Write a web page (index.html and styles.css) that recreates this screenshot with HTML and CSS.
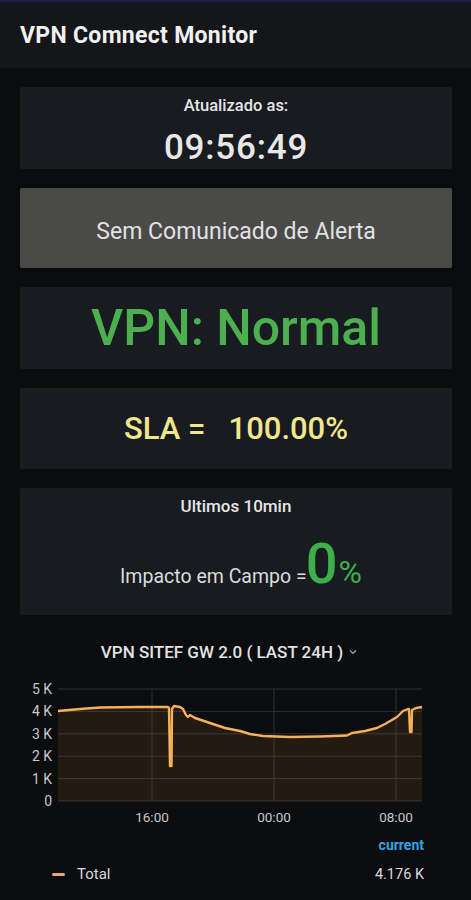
FILE: index.html
```html
<!DOCTYPE html>
<html lang="pt">
<head>
    <meta charset="UTF-8">
    <meta name="viewport" content="width=device-width, initial-scale=1.0">
    <title>VPN Comnect Monitor</title>
    <link rel="stylesheet" href="styles.css">
</head>
<body>
    <header class="topbar">
        <h1 class="title">VPN Comnect Monitor</h1>
    </header>

    <main class="panels">
        <section class="panel panel-time">
            <div class="time-label">Atualizado as:</div>
            <div class="time-value">09:56:49</div>
        </section>

        <section class="panel panel-alert">
            Sem Comunicado de Alerta
        </section>

        <section class="panel panel-status">
            VPN: Normal
        </section>

        <section class="panel panel-sla">
            <span class="sla-text">SLA =   100.00%</span>
        </section>

        <section class="panel panel-impact">
            <div class="impact-title">Ultimos 10min</div>
            <div class="impact-row">
                <span class="impact-label">Impacto em Campo =</span>
                <span class="impact-value">0</span>
                <span class="impact-unit">%</span>
            </div>
        </section>
    </main>

    <section class="graph">
        <div class="graph-title">
            VPN SITEF GW 2.0 ( LAST 24H )
            <svg class="chevron" width="10" height="8" viewBox="0 0 10 8">
                <path d="M2 2.5 L5 5.5 L8 2.5" fill="none" stroke="#9fa3a8" stroke-width="1.2"/>
            </svg>
        </div>

        <svg class="chart" width="471" height="160" viewBox="0 0 471 160">
            <g class="grid" stroke="#2c2e33" stroke-width="1">
                <line x1="58" y1="20" x2="422" y2="20"/>
                <line x1="58" y1="42.4" x2="422" y2="42.4"/>
                <line x1="58" y1="64.8" x2="422" y2="64.8"/>
                <line x1="58" y1="87.2" x2="422" y2="87.2"/>
                <line x1="58" y1="109.6" x2="422" y2="109.6"/>
                <line x1="58" y1="132" x2="422" y2="132"/>
                <line x1="152" y1="20" x2="152" y2="132"/>
                <line x1="274" y1="20" x2="274" y2="132"/>
                <line x1="396" y1="20" x2="396" y2="132"/>
            </g>

            <path class="area" d="M58,42 L80,40 L100,38.5 L140,38 L168,38 L169,39 L170,97 L171.5,97 L172,40 L174,37 L180,38 L183,40 L186,46 L188,48 L190,46 L195,49 L210,54 L225,59 L240,62 L250,65 L263,67 L290,68 L320,67.5 L347,66.5 L352,64 L365,62 L377,59 L385,55 L397,48 L403,42 L408,40 L409,40 L410,63 L411.5,63 L412,41 L416,39 L422,38 L422,132 L58,132 Z"/>
            <path class="line" d="M58,42 L80,40 L100,38.5 L140,38 L168,38 L169,39 L170,97 L171.5,97 L172,40 L174,37 L180,38 L183,40 L186,46 L188,48 L190,46 L195,49 L210,54 L225,59 L240,62 L250,65 L263,67 L290,68 L320,67.5 L347,66.5 L352,64 L365,62 L377,59 L385,55 L397,48 L403,42 L408,40 L409,40 L410,63 L411.5,63 L412,41 L416,39 L422,38"/>

            <g class="axis">
                <text x="52" y="25" text-anchor="end">5 K</text>
                <text x="52" y="47.4" text-anchor="end">4 K</text>
                <text x="52" y="69.8" text-anchor="end">3 K</text>
                <text x="52" y="92.2" text-anchor="end">2 K</text>
                <text x="52" y="114.6" text-anchor="end">1 K</text>
                <text x="52" y="137" text-anchor="end">0</text>
                <text class="tick-x" x="152" y="153" text-anchor="middle">16:00</text>
                <text class="tick-x" x="274" y="153" text-anchor="middle">00:00</text>
                <text class="tick-x" x="396" y="153" text-anchor="middle">08:00</text>
            </g>
        </svg>

        <div class="legend">
            <div class="legend-head">current</div>
            <div class="legend-row">
                <span class="legend-swatch"></span>
                <span class="legend-name">Total</span>
                <span class="legend-value">4.176 K</span>
            </div>
        </div>
    </section>
</body>
</html>
```

FILE: styles.css
```css
body {
    margin: 0;
    padding: 0;
    background-color: #0b0c0e;
    color: #d8d9da;
    font-family: Roboto, "Liberation Sans", sans-serif;
}

.topbar {
    height: 66px;
    border-top: 2px solid #231c4f;
    background-color: #141619;
    display: flex;
    align-items: center;
    padding-left: 20px;
}

.title {
    margin: 0;
    font-size: 23px;
    font-weight: 700;
    letter-spacing: 0.3px;
    color: #f0f0f0;
}

.panels {
    display: flex;
    flex-direction: column;
    gap: 19px;
    padding: 19px 19px 0 20px;
}

.panel {
    background-color: #181b1f;
    border-radius: 2px;
    display: flex;
    flex-direction: column;
    align-items: center;
    justify-content: center;
    text-align: center;
}

.panel-time {
    height: 82px;
    justify-content: flex-start;
}

.time-label {
    margin-top: 9px;
    font-size: 16.5px;
    font-weight: 500;
    color: #e6e6e6;
}

.time-value {
    margin-top: 15px;
    font-size: 35px;
    font-weight: 500;
    line-height: 1;
    color: #e8e8e8;
    letter-spacing: 0.8px;
}

.panel-alert {
    height: 80px;
    padding-top: 6px;
    box-sizing: border-box;
    background-color: #4a4a48;
    font-size: 23px;
    color: #e2e2e2;
}

.panel-status {
    height: 82px;
    font-size: 50px;
    font-weight: 500;
    color: #4caf50;
}

.panel-sla {
    height: 81px;
}

.sla-text {
    white-space: pre;
    font-size: 31px;
    font-weight: 500;
    color: #f2e68c;
}

.panel-impact {
    height: 127px;
    justify-content: flex-start;
}

.impact-title {
    margin-top: 8px;
    font-size: 17px;
    font-weight: 500;
    color: #e6e6e6;
}

.impact-row {
    margin-top: 20px;
    display: flex;
    align-items: baseline;
    margin-left: 10px;
}

.impact-label {
    font-size: 19.5px;
    color: #dcdcdc;
}

.impact-value {
    margin-left: -1px;
    font-size: 56px;
    font-weight: 500;
    color: #3cb04a;
    line-height: 1;
}

.impact-unit {
    margin-left: 1px;
    font-size: 32px;
    color: #3cb04a;
}

.graph {
    margin-top: 20px;
}

.graph-title {
    height: 34px;
    display: flex;
    align-items: center;
    justify-content: center;
    gap: 5px;
    font-size: 17px;
    font-weight: 500;
    color: #e2e2e2;
    padding-right: 12px;
}

.chart {
    display: block;
}

.area {
    fill: rgba(255, 160, 60, 0.1);
}

.line {
    fill: none;
    stroke: #f5b05a;
    stroke-width: 2.4;
    stroke-linejoin: round;
}

.axis text {
    font-family: Roboto, "Liberation Sans", sans-serif;
    font-size: 14px;
    fill: #c7c8ca;
}

.axis .tick-x {
    font-size: 13.5px;
}

.legend {
    padding: 8px 47px 0 52px;
}

.legend-head {
    text-align: right;
    font-size: 14px;
    font-weight: 700;
    color: #33a2e5;
}

.legend-row {
    display: flex;
    align-items: center;
    margin-top: 12px;
    font-size: 15px;
    color: #d8d9da;
}

.legend-swatch {
    width: 13px;
    height: 3px;
    border-radius: 2px;
    background-color: #e5aa6a;
    margin-right: 12px;
}

.legend-name {
    flex: 1;
}

.legend-value {
    font-size: 14.5px;
    text-align: right;
}
```
